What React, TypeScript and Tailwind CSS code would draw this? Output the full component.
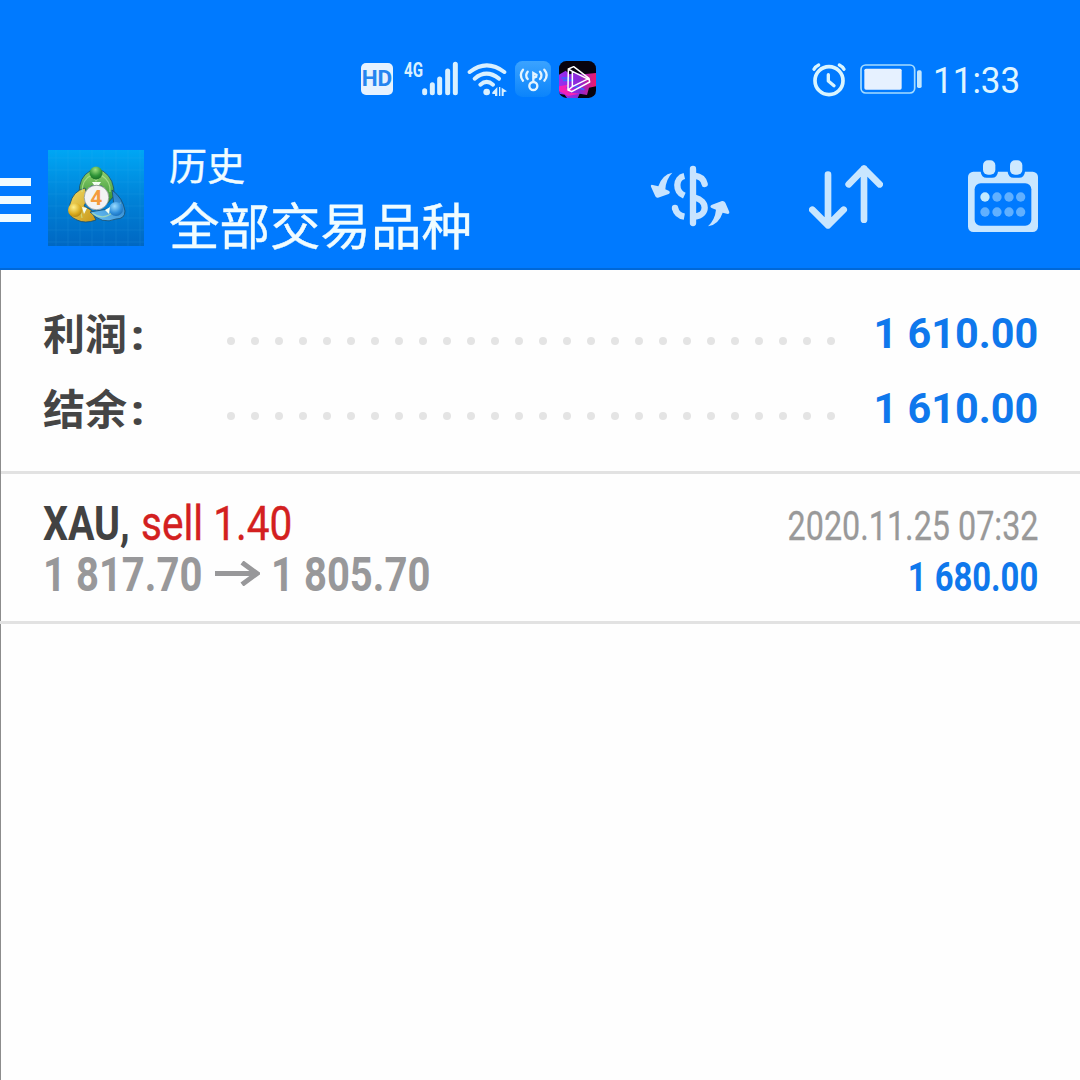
import React from "react";

type SummaryItem = {
  label: string;
  value: string;
};

const summary: SummaryItem[] = [
  { label: "利润", value: "1 610.00" },
  { label: "结余", value: "1 610.00" },
];

const dots = Array.from({ length: 26 }, (_, i) => i);

function SignalIcon() {
  return (
    <svg className="-mt-[5px] ml-[11px] h-[40px] w-[55px]" viewBox="162 21 165 120">
      <text
        x="162"
        y="80"
        fontSize="60"
        fontWeight="700"
        textLength="57"
        lengthAdjust="spacingAndGlyphs"
        fill="#d9f0ff"
        className="font-[Roboto,sans-serif]"
      >
        4G
      </text>
      <g stroke="#d9f0ff" strokeWidth="15" strokeLinecap="round">
        <path d="M224 122V128M247 104V128M269 87V128M293 63V128M316 43V128" />
      </g>
    </svg>
  );
}

function WifiIcon() {
  return (
    <svg className="ml-[8px] h-[36px] w-[42px]" viewBox="350 33 126 108">
      <g fill="none" stroke="#d9f0ff" strokeWidth="12" strokeLinecap="round">
        <path d="M358 63Q409 23 462 63" />
        <path d="M373 83Q408 53 446 83" />
        <path d="M390 101Q409 84 428 101" />
      </g>
      <circle cx="409" cy="123" r="10" fill="#d9f0ff" />
      <path
        d="M426 124L441 108V135H434V129H426ZM446 108H450V135H446ZM454 110L470 121L460 124V135H454Z"
        fill="#d9f0ff"
      />
    </svg>
  );
}

function HotspotIcon() {
  return (
    <svg className="-mt-[1px] ml-[6px] h-[36px] w-[36px]" viewBox="492 33 108 108">
      <defs>
        <linearGradient id="hotspot" x1="0" y1="0" x2="0" y2="1">
          <stop offset="0" stopColor="#3ba3ff" />
          <stop offset="1" stopColor="#0b84fb" />
        </linearGradient>
      </defs>
      <rect x="492" y="33" width="108" height="108" rx="22" fill="url(#hotspot)" />
      <g fill="none" stroke="#e3f4ff" strokeWidth="7" strokeLinecap="round">
        <path d="M516 59Q503 75 516 92M530 65Q521 76 530 87M580 59Q594 75 580 92M567 65Q576 76 567 87" />
        <circle cx="547" cy="108" r="12" />
        <path d="M547 94V69L557 75M547 84L556 80" />
      </g>
    </svg>
  );
}

function PlayerIcon() {
  return (
    <svg className="ml-[8px] h-[37px] w-[37px]" viewBox="628 32 111 111">
      <defs>
        <clipPath id="playerClip">
          <rect x="628" y="32" width="111" height="111" rx="22" />
        </clipPath>
        <linearGradient id="player" x1="0" y1="0" x2="1" y2="0">
          <stop offset="0" stopColor="#9a2cf0" />
          <stop offset="0.55" stopColor="#8a29d8" />
          <stop offset="1" stopColor="#f01868" />
        </linearGradient>
      </defs>
      <g clipPath="url(#playerClip)">
        <rect x="628" y="32" width="111" height="111" fill="#08030f" />
        <path
          d="M628 73L648 61L660 72L676 68L700 72L739 68V108L718 112L712 134L690 130L684 143H652L645 133L628 130Z"
          fill="url(#player)"
        />
        <path d="M628 108L655 103L648 114L676 119L655 126L690 130L655 137L628 122Z" fill="#f321b7" />
        <path d="M636 83H660M640 90H672M670 105L704 118" stroke="#356bff" strokeWidth="5" />
        <path
          d="M656 56L672 49L718 84L720 95L666 124L655 119ZM656 56L668 63V109L656 119M668 63L718 88M668 109L718 84"
          fill="none"
          stroke="#fff"
          strokeWidth="4.5"
          strokeLinejoin="round"
        />
      </g>
    </svg>
  );
}

function AlarmIcon() {
  return (
    <svg className="h-[36px] w-[36px]" viewBox="30 35 108 108">
      <g fill="none" stroke="#d9f5ff" strokeLinecap="round">
        <circle cx="84" cy="91" r="42" strokeWidth="11" />
        <path d="M82 73V92L99 106" strokeWidth="10" strokeLinejoin="round" />
        <path d="M39 57Q43 49 53 44M115 44Q125 49 129 57" strokeWidth="10" />
      </g>
    </svg>
  );
}

function BatteryIcon() {
  return (
    <svg className="-mt-[1px] ml-[13px] h-[30px] w-[62px]" viewBox="178 43 186 90">
      <rect x="181" y="46" width="161" height="84" rx="14" fill="none" stroke="#a5dcff" strokeWidth="5" />
      <rect x="191" y="57" width="112" height="63" rx="5" fill="#e6f1ff" />
      <rect x="349" y="62" width="14" height="53" rx="5" fill="#c4e8ff" />
    </svg>
  );
}

function AppLogo() {
  return (
    <svg className="ml-[17px] h-[96px] w-[96px]" viewBox="0 0 96 96">
      <defs>
        <linearGradient id="logoBg" x1="0" y1="0" x2="0" y2="1">
          <stop offset="0" stopColor="#00a6f4" />
          <stop offset="0.5" stopColor="#0083d8" />
          <stop offset="1" stopColor="#0067c2" />
        </linearGradient>
        <linearGradient id="logoGreen" x1="0" y1="0" x2="0" y2="1">
          <stop offset="0" stopColor="#8fd06c" />
          <stop offset="1" stopColor="#2b8c30" />
        </linearGradient>
        <linearGradient id="logoYellow" x1="0" y1="0" x2="1" y2="1">
          <stop offset="0" stopColor="#f2dc65" />
          <stop offset="1" stopColor="#c79516" />
        </linearGradient>
        <linearGradient id="logoBlue" x1="1" y1="0" x2="0" y2="1">
          <stop offset="0" stopColor="#1b74c4" />
          <stop offset="1" stopColor="#6fc5f5" />
        </linearGradient>
        <radialGradient id="headGreen" cx="0.45" cy="0.25" r="0.8">
          <stop offset="0" stopColor="#a0e080" />
          <stop offset="0.6" stopColor="#2e9437" />
          <stop offset="1" stopColor="#176b25" />
        </radialGradient>
        <radialGradient id="headYellow" cx="0.4" cy="0.3" r="0.8">
          <stop offset="0" stopColor="#fff08a" />
          <stop offset="0.6" stopColor="#dbac1f" />
          <stop offset="1" stopColor="#a57a10" />
        </radialGradient>
        <radialGradient id="headBlue" cx="0.4" cy="0.3" r="0.8">
          <stop offset="0" stopColor="#9bdcff" />
          <stop offset="0.6" stopColor="#2f8fdc" />
          <stop offset="1" stopColor="#1265b0" />
        </radialGradient>
      </defs>
      <rect width="96" height="96" fill="url(#logoBg)" />
      <path
        d="M8 0V96M20 0V96M32 0V96M44 0V96M56 0V96M68 0V96M80 0V96M92 0V96M0 8H96M0 20H96M0 32H96M0 44H96M0 56H96M0 68H96M0 80H96M0 92H96"
        stroke="#45b5f0"
        strokeWidth="0.7"
        opacity="0.2"
      />
      <g stroke="#174d6d" strokeWidth="0.8">
        <path d="M31 43Q31 27 42 21H55Q67 29 66 46L59 54L54 36H43L38 45Z" fill="url(#logoGreen)" />
        <path d="M37 38Q25 41 22 54Q18 66 29 70Q37 74 48 70L43 60L36 56L40 48Z" fill="url(#logoYellow)" />
        <path d="M64 40Q75 48 77 61Q77 69 68 69Q54 75 42 62L60 59L66 55Z" fill="url(#logoBlue)" />
      </g>
      <path
        d="M34 42Q34 29 44 25L48 31L53 25Q63 31 62 42M25 55L32 58L34 68M44 63Q55 71 65 62L64 56L73 53"
        fill="none"
        stroke="#c5eda1"
        strokeWidth="1.2"
        opacity="0.6"
      />
      <circle cx="48" cy="23" r="6.5" fill="url(#headGreen)" />
      <circle cx="27" cy="60" r="7" fill="url(#headYellow)" />
      <circle cx="68" cy="59" r="7" fill="url(#headBlue)" />
      <path d="M44 32H53L51 35H46ZM34 57L39 58L36 64ZM57 60L62 57L61 64Z" fill="#f4fff3" />
      <circle cx="48.5" cy="47.5" r="12.3" fill="#f3f3f3" stroke="#8c9795" strokeWidth="0.8" />
      <text
        x="48.3"
        y="55"
        textAnchor="middle"
        fontSize="21"
        fontWeight="700"
        fill="#f49b3c"
        className="font-[Roboto,sans-serif]"
      >
        4
      </text>
    </svg>
  );
}

function CurrencyIcon() {
  return (
    <svg className="-mt-[4px] h-[62px] w-[80px]" viewBox="30 45 240 186">
      <g fill="none" stroke="#c8e4ff" strokeWidth="19">
        <path d="M159 57V219" strokeLinecap="round" />
        <path d="M133 78C106 84 104 124 133 137" />
        <path d="M164 77Q189 80 194 102" strokeLinecap="round" />
        <path d="M164 143C204 152 204 196 164 200" />
        <path d="M105 174Q110 196 133 200" />
      </g>
      <circle cx="105" cy="174" r="9.5" fill="#c8e4ff" />
      <path
        d="M97 68Q66 74 55 109L35 104Q31 105 33 110L46 139Q48 144 54 143L86 132Q93 126 86 122L76 118Q78 87 97 68Z"
        fill="#c8e4ff"
      />
      <path
        d="M204 229Q236 224 248 188L264 192Q269 191 268 186L256 158Q253 152 246 153L216 164Q207 169 215 174L228 179Q225 209 204 229Z"
        fill="#c8e4ff"
      />
    </svg>
  );
}

function SortIcon() {
  return (
    <svg className="-mt-[2px] ml-[79px] h-[64px] w-[74px]" viewBox="508 46 222 192">
      <path
        d="M565 75V227M518 180L565 227L612 180M673 210V57M627 104L673 57L720 104"
        fill="none"
        stroke="#c8e6ff"
        strokeWidth="20"
        strokeLinecap="round"
        strokeLinejoin="round"
      />
    </svg>
  );
}

function CalendarIcon() {
  return (
    <svg className="-mt-[4px] mr-[42px] ml-[85px] h-[72px] w-[70px]" viewBox="54 31 210 216">
      <rect x="54" y="66" width="210" height="181" rx="16" fill="#c8e6ff" />
      <rect x="74" y="101" width="170" height="127" rx="18" fill="#007aff" />
      <path
        d="M92 64H144V66Q142 84 126 84H110Q94 84 92 66ZM173 64H225V66Q223 84 207 84H191Q175 84 173 66Z"
        fill="#007aff"
      />
      <rect x="99" y="32" width="37" height="43" rx="15" fill="#cde9ff" />
      <rect x="180" y="32" width="37" height="43" rx="15" fill="#cde9ff" />
      <circle cx="105" cy="142" r="14" fill="#c2eaff" />
      <g fill="#61b0ff">
        <circle cx="141" cy="142" r="14" />
        <circle cx="177" cy="142" r="14" />
        <circle cx="212" cy="142" r="14" />
        <circle cx="105" cy="187" r="14" />
        <circle cx="141" cy="187" r="14" />
        <circle cx="177" cy="187" r="14" />
        <circle cx="212" cy="187" r="14" />
      </g>
    </svg>
  );
}

function StatusBar() {
  return (
    <div className="mt-[61px] flex h-[37px] items-center pl-[361px]">
      <div className="-mt-[1px] flex h-[32px] w-[32px] items-center justify-center rounded-[5px] bg-[#e6f2ff] text-[22.5px] font-bold text-[#2585ef]">
        <span>HD</span>
      </div>
      <SignalIcon />
      <WifiIcon />
      <HotspotIcon />
      <PlayerIcon />
      <div className="ml-auto flex items-center pr-[59px] text-[#dff5ff]">
        <AlarmIcon />
        <BatteryIcon />
        <span className="ml-[11px] w-[88px] origin-left scale-x-[0.96] pt-[1px] text-[36.5px] leading-[37px] whitespace-nowrap">
          11:33
        </span>
      </div>
    </div>
  );
}

function Toolbar() {
  return (
    <div className="mt-[30px] flex h-[140px] items-center">
      <div className="flex w-[31px] flex-col gap-[10px] pt-[4px]">
        <div className="h-[8px] bg-[#f0fbff]" />
        <div className="h-[8px] bg-[#f0fbff]" />
        <div className="h-[8px] bg-[#f0fbff]" />
      </div>
      <AppLogo />
      <div className="-mt-[3px] ml-[25px] font-['Noto_Sans_CJK_SC',sans-serif] whitespace-nowrap text-[#f0fcff] [-webkit-text-stroke:0.4px_#f0fcff]">
        <div className="text-[38px] leading-[53px]">历史</div>
        <div className="text-[50.5px] leading-[66px]">全部交易品种</div>
      </div>
      <div className="ml-auto flex items-center">
        <CurrencyIcon />
        <SortIcon />
        <CalendarIcon />
      </div>
    </div>
  );
}

function SummaryRow({ label, value }: SummaryItem) {
  return (
    <div className="flex h-[75px] items-center pr-[42px] pl-[43px] font-bold">
      <div className="flex w-[184px] items-center text-[42px] leading-[62px] text-[#454545]">
        <span className="-mt-[4px] font-['Noto_Sans_CJK_SC',sans-serif]">{label}</span>
        <span className="ml-[4px] origin-left scale-x-[1.1] font-['Open_Sans',sans-serif]">:</span>
      </div>
      <div className="flex gap-[16px] pt-[15px]">
        {dots.map((dot) => (
          <div key={dot} className="h-[8px] w-[8px] rounded-full bg-[#e4e4e4]" />
        ))}
      </div>
      <span className="ml-auto origin-right scale-x-[0.985] text-[42px] whitespace-nowrap text-[#0f78ec]">
        {value}
      </span>
    </div>
  );
}

function DealRow() {
  return (
    <div className="flex h-[150px] justify-between border-b-[3px] border-[#e2e2e2] pt-[24px] pr-[42px] pl-[43px]">
      <div className="text-[48px] leading-[51px] whitespace-nowrap">
        <div className="flex h-[51px]">
          <div className="w-[98px]">
            <span className="inline-block origin-left scale-x-[0.82] font-bold text-[#424242]">XAU,</span>
          </div>
          <div className="w-[152px]">
            <span className="inline-block origin-left scale-x-[0.845] text-[#d32020] [-webkit-text-stroke:0.4px_#d32020]">
              sell 1.40
            </span>
          </div>
        </div>
        <div className="flex h-[51px] font-bold text-[#98989a]">
          <div className="w-[172px]">
            <span className="inline-block origin-left scale-x-[0.834]">1 817.70</span>
          </div>
          <svg className="mt-[12px] h-[25px] w-[45px]" viewBox="0 0 45 25">
            <path d="M0 12.5H42M27 1.5L42 12.5L27 23.5" fill="none" stroke="#98989a" strokeWidth="5" />
          </svg>
          <div className="ml-[11px] w-[160px]">
            <span className="inline-block origin-left scale-x-[0.834]">1 805.70</span>
          </div>
        </div>
      </div>
      <div className="flex flex-col items-end pt-[3px] text-[40px] leading-[51px] whitespace-nowrap">
        <span className="origin-right scale-x-[0.808] text-[#999999] [-webkit-text-stroke:0.3px_#999999]">
          2020.11.25 07:32
        </span>
        <span className="origin-right scale-x-[0.82] font-bold text-[#0f78ec]">1 680.00</span>
      </div>
    </div>
  );
}

export default function App() {
  return (
    <div className="h-[1080px] w-[1080px] overflow-hidden bg-[#fefefe] font-[Roboto,sans-serif]">
      <header className="flex h-[270px] flex-col border-b-2 border-[#0068d8] bg-[#007aff]">
        <StatusBar />
        <Toolbar />
      </header>
      <main className="h-[810px] border-l border-[#8c8c8c]">
        <section className="h-[204px] border-b-[3px] border-[#e2e2e2] pt-[26px]">
          <div className="-ml-px">
            {summary.map((item) => (
              <SummaryRow key={item.label} {...item} />
            ))}
          </div>
        </section>
        <section className="-ml-px">
          <DealRow />
        </section>
      </main>
    </div>
  );
}
